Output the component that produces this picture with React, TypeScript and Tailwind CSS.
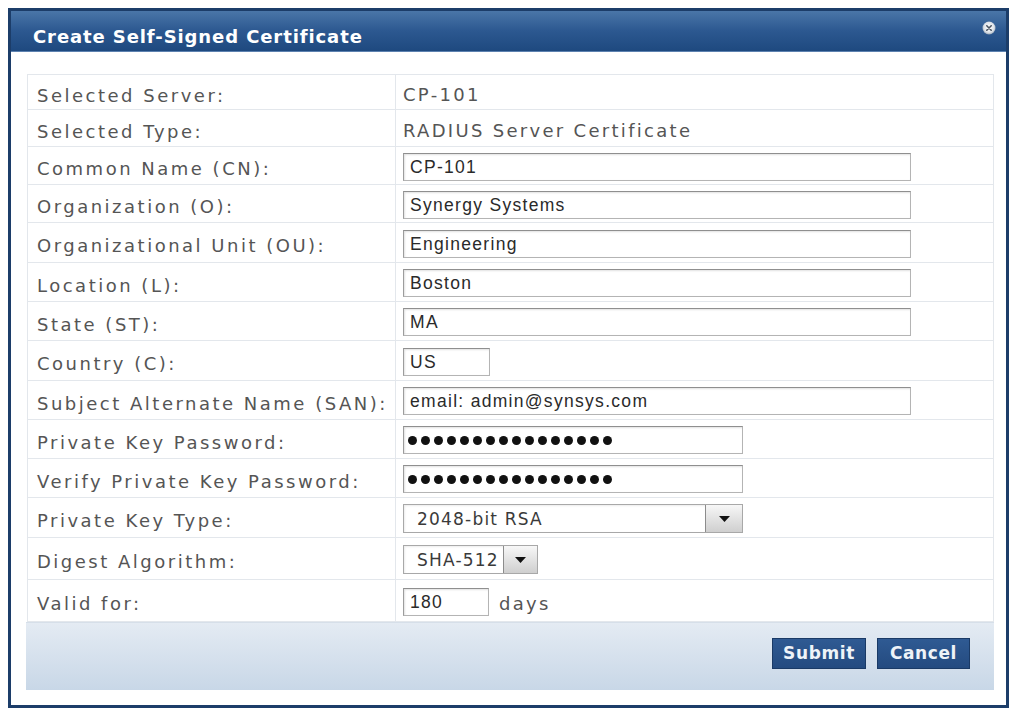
import React from "react";

const labelFont = { fontFamily: '"DejaVu Sans", Verdana, sans-serif' };
const inputFont = { fontFamily: '"Liberation Sans", Tahoma, Arial, sans-serif' };

function TextBox({ value, w }: { value: string; w: string }) {
  return (
    <div
      className={`${w} h-[28px] border border-[#b4b4b4] border-t-[#8f8f8f] border-l-[#9c9c9c] bg-white flex items-center pl-[6px] pt-[1px] text-[17.5px] tracking-[1.3px] text-[#2a2a2a] shadow-[inset_1px_1px_2px_rgba(0,0,0,0.12)]`}
      style={inputFont}
    >
      {value}
    </div>
  );
}

function Dots({ w }: { w: string }) {
  return (
    <div
      className={`${w} h-[28px] border border-[#b4b4b4] border-t-[#8f8f8f] border-l-[#9c9c9c] bg-white flex items-center pl-[4px] gap-[4px] shadow-[inset_1px_1px_2px_rgba(0,0,0,0.12)]`}
    >
      {Array.from({ length: 16 }).map((_, i) => (
        <span key={i} className="w-[9px] h-[9px] rounded-full bg-[#111]" />
      ))}
    </div>
  );
}

function DropBtn({ w }: { w: string }) {
  return (
    <div
      className={`${w} h-full border-l border-[#8c8c8c] bg-gradient-to-b from-[#f7f7f7] to-[#cfcfcf] flex items-center justify-center`}
    >
      <svg width="11" height="6" viewBox="0 0 11 6">
        <path d="M0 0 L11 0 L5.5 6 Z" fill="#111" />
      </svg>
    </div>
  );
}

function Select({ value, w, btn }: { value: string; w: string; btn: string }) {
  return (
    <div
      className={`${w} h-[29px] border border-[#a8a8a8] bg-white flex items-stretch shadow-[inset_1px_1px_2px_rgba(0,0,0,0.08)]`}
    >
      <div
        className="flex-1 flex items-center pl-[13px] pt-[2px] text-[17px] text-[#3a3a3a] tracking-[1.2px] whitespace-nowrap overflow-hidden"
        style={labelFont}
      >
        {value}
      </div>
      <DropBtn w={btn} />
    </div>
  );
}

type Row = { label: string; h: string; content: React.ReactNode };

export default function App() {
  const rows: Row[] = [
    {
      label: "Selected Server:",
      h: "h-[35px]",
      content: <span className="pt-[3px]">CP-101</span>,
    },
    {
      label: "Selected Type:",
      h: "h-[37px]",
      content: <span className="pt-[3px]">RADIUS Server Certificate</span>,
    },
    { label: "Common Name (CN):", h: "h-[38px]", content: <TextBox value="CP-101" w="w-[508px]" /> },
    { label: "Organization (O):", h: "h-[38px]", content: <TextBox value="Synergy Systems" w="w-[508px]" /> },
    { label: "Organizational Unit (OU):", h: "h-[40px]", content: <TextBox value="Engineering" w="w-[508px]" /> },
    { label: "Location (L):", h: "h-[39px]", content: <TextBox value="Boston" w="w-[508px]" /> },
    { label: "State (ST):", h: "h-[39px]", content: <TextBox value="MA" w="w-[508px]" /> },
    { label: "Country (C):", h: "h-[40px]", content: <TextBox value="US" w="w-[87px]" /> },
    {
      label: "Subject Alternate Name (SAN):",
      h: "h-[39px]",
      content: <TextBox value="email: admin@synsys.com" w="w-[508px]" />,
    },
    { label: "Private Key Password:", h: "h-[39px]", content: <Dots w="w-[340px]" /> },
    { label: "Verify Private Key Password:", h: "h-[39px]", content: <Dots w="w-[340px]" /> },
    {
      label: "Private Key Type:",
      h: "h-[40px]",
      content: <Select value="2048-bit RSA" w="w-[340px]" btn="w-[37px]" />,
    },
    {
      label: "Digest Algorithm:",
      h: "h-[42px]",
      content: <Select value="SHA-512" w="w-[135px]" btn="w-[34px]" />,
    },
    {
      label: "Valid for:",
      h: "h-[41px]",
      content: (
        <div className="flex items-center gap-[10px]">
          <TextBox value="180" w="w-[86px]" />
          <span className="pt-[3px]">days</span>
        </div>
      ),
    },
  ];

  return (
    <div className="w-[1015px] h-[709px] bg-white pt-[8px] pl-[8px] overflow-hidden">
      <div className="w-[1001px] h-[700px] border-[3px] border-[#1c3d69] bg-white flex flex-col">
        {/* Header */}
        <div className="h-[41px] shrink-0 bg-gradient-to-b from-[#4a76a8] via-[#2c5890] to-[#1e497f] border-b border-[#5d82b0] flex items-start justify-between pl-[22px] pr-[10px]">
          <span
            className="text-white font-bold text-[18px] tracking-[0.9px] mt-[12px]"
            style={labelFont}
          >
            Create Self-Signed Certificate
          </span>
          <svg width="14" height="14" viewBox="0 0 14 14" className="mt-[10px]">
            <defs>
              <radialGradient id="cg" cx="50%" cy="45%" r="55%">
                <stop offset="0%" stopColor="#ffffff" />
                <stop offset="70%" stopColor="#dfe4ea" />
                <stop offset="100%" stopColor="#9aa8b8" />
              </radialGradient>
            </defs>
            <circle cx="7" cy="7" r="6.5" fill="url(#cg)" />
            <path d="M4.8 4.8 L9.2 9.2 M9.2 4.8 L4.8 9.2" stroke="#4a5563" strokeWidth="1.6" strokeLinecap="round" />
          </svg>
        </div>

        {/* Body */}
        <div className="pl-[16px] pt-[22px] flex flex-col">
          <div className="w-[967px] border border-[#e3e7ec]">
            {rows.map((r, i) => (
              <div
                key={i}
                className={`${r.h} flex ${i < rows.length - 1 ? "border-b border-[#e3e7ec]" : ""}`}
              >
                <div
                  className="w-[368px] shrink-0 border-r border-[#e3e7ec] flex items-center pl-[9px] pt-[6px] text-[18px] text-[#555] tracking-[2.5px] whitespace-nowrap"
                  style={labelFont}
                >
                  {r.label}
                </div>
                <div
                  className="flex-1 flex items-center pl-[7px] pt-[2px] text-[18px] text-[#555] tracking-[2.3px] whitespace-nowrap"
                  style={labelFont}
                >
                  {r.content}
                </div>
              </div>
            ))}
          </div>

          {/* Footer */}
          <div className="w-[968px] -ml-[1px] h-[68px] border-t border-[#d6dfe9] bg-gradient-to-b from-[#e4ebf3] to-[#c8d7e7] flex justify-end items-start pt-[15px] pr-[24px] gap-[11px]">
            <button
              className="w-[94px] h-[31px] bg-gradient-to-b from-[#2f5a93] to-[#244b80] border border-[#1a3a66] text-[#eef3f8] font-bold text-[17px] tracking-[0.6px]"
              style={labelFont}
            >
              Submit
            </button>
            <button
              className="w-[93px] h-[31px] bg-gradient-to-b from-[#2f5a93] to-[#244b80] border border-[#1a3a66] text-[#eef3f8] font-bold text-[17px] tracking-[0.6px]"
              style={labelFont}
            >
              Cancel
            </button>
          </div>
        </div>
      </div>
    </div>
  );
}
